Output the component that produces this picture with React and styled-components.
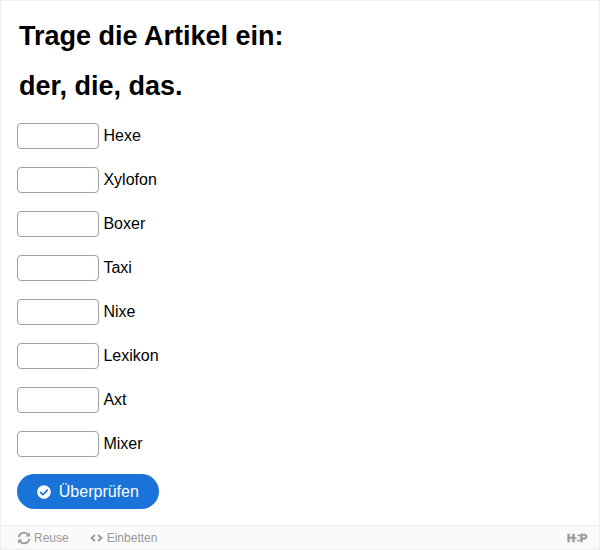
import React,{useState} from 'react';
import styled, {createGlobalStyle} from 'styled-components';
import {FaCheckCircle} from 'react-icons/fa';

const words = ['Hexe', 'Xylofon', 'Boxer', 'Taxi', 'Nixe', 'Lexikon', 'Axt', 'Mixer'];

function ReuseIcon() {
  return (
    <svg width="14" height="14" viewBox="0 0 14 14" fill="none" stroke="currentColor" strokeWidth="1.7">
      <path d="M1.6 6.2A5.3 5.3 0 0 1 11.2 4"/>
      <path d="M12.4 7.8A5.3 5.3 0 0 1 2.8 10"/>
      <path d="M12.9 1.2V5.6H8.5Z" fill="currentColor" stroke="none"/>
      <path d="M1.1 12.8V8.4H5.5Z" fill="currentColor" stroke="none"/>
    </svg>
  )
}

function EmbedIcon() {
  return (
    <svg width="13" height="9" viewBox="0 0 13 9" fill="none" stroke="currentColor" strokeWidth="1.8">
      <path d="M5 1L1.5 4L5 7"/>
      <path d="M8 1L11.5 4L8 7"/>
    </svg>
  )
}

function Logo() {
  return (
    <svg width="21" height="10" viewBox="0 0 21 10">
      <LogoLetter x="0" y="9" textLength="8" lengthAdjust="spacingAndGlyphs">H</LogoLetter>
      <path d="M7 5H9.5M10.5 2.6H13M10 7.4H12.5" stroke="currentColor" strokeWidth="1.5"/>
      <LogoLetter x="12.8" y="8.6" textLength="7.6" lengthAdjust="spacingAndGlyphs">P</LogoLetter>
    </svg>
  )
}

function App() {
  const [answers, setAnswers] = useState({});

  return (
    <Frame>
      <GlobalStyle />
      <Content>
        <Heading>
          <p>Trage die Artikel ein:</p>
          <p>der, die, das.</p>
        </Heading>
        <WordList>
          {words.map((word) => (
            <Row key={word}>
              <Blank aria-label={word} value={answers[word] || ''} onChange={(e) => setAnswers({...answers, [word]: e.target.value})}/>
              <span>{word}</span>
            </Row>
          ))}
        </WordList>
        <CheckButton><FaCheckCircle size={14}/>Überprüfen</CheckButton>
      </Content>
      <Footer>
        <Action $gap="3px"><ReuseIcon />Reuse</Action>
        <Action $gap="4px"><EmbedIcon />Einbetten</Action>
        <LogoLink href="#" aria-label="H5P"><Logo /></LogoLink>
      </Footer>
    </Frame>
  )
}

const GlobalStyle = createGlobalStyle`
  *{
    box-sizing: border-box;
  }
  body{
    margin: 0;
    background: #fff;
    color: #000;
    font-family: "Liberation Sans", Arial, sans-serif;
    font-size: 16px;
  }
`

const Frame = styled.div`
  display: flex;
  flex-direction: column;
  height: 550px;
  border: 1px solid #eee;
`

const Content = styled.main`
  flex: 1;
  padding: 10px 16px 0;
`

const Heading = styled.div`
  padding: 0 2px;
  font-size: 27px;
  font-weight: bold;
  line-height: 50px;
  p{
    margin: 0;
  }
`

const WordList = styled.div`
  display: flex;
  flex-direction: column;
  gap: 18px;
  margin-top: 12px;
`

const Row = styled.label`
  display: flex;
  align-items: center;
  gap: 4.45px;
  height: 26px;
  span{
    line-height: 24px;
    margin-bottom: 1px;
  }
`

const Blank = styled.input`
  width: 82px;
  height: 26px;
  padding: 3px 8px;
  border: 1px solid #a0a0a0;
  border-radius: 4px;
  background: #fff;
  font: inherit;
  outline: none;
`

const CheckButton = styled.button`
  display: flex;
  align-items: center;
  gap: 7.8px;
  width: 142px;
  height: 35px;
  margin-top: 17px;
  padding: 0 0 0 20px;
  border: none;
  border-radius: 18px;
  background: #1a73d9;
  color: #fff;
  font: inherit;
  cursor: pointer;
`

const Footer = styled.footer`
  display: flex;
  align-items: center;
  gap: 21px;
  height: 24px;
  padding: 1px 11px 0 16px;
  border-top: 1px solid #eee;
  background: #fafafa;
  color: #999;
`

const Action = styled.button`
  display: flex;
  align-items: center;
  gap: ${(props) => props.$gap};
  padding: 0;
  border: none;
  background: none;
  color: inherit;
  font-family: inherit;
  font-size: 12px;
  line-height: 22px;
  cursor: pointer;
`

const LogoLink = styled.a`
  display: flex;
  margin-left: auto;
  color: #999;
`

const LogoLetter = styled.text`
  fill: currentColor;
  stroke: currentColor;
  stroke-width: 0.6px;
  font-size: 10.5px;
  font-weight: bold;
`

export default App
